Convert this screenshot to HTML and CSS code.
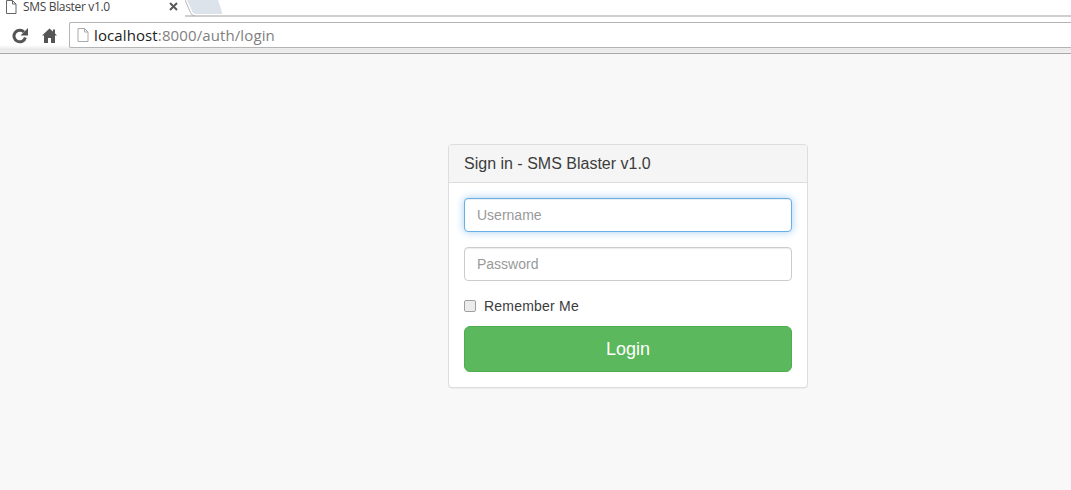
FILE: index.html
```html
<!DOCTYPE html>
<html lang="en">
<head>
    <meta charset="UTF-8">
    <meta name="viewport" content="width=device-width, initial-scale=1.0">
    <title>SMS Blaster v1.0</title>
    <link rel="stylesheet" href="styles.css">
</head>
<body>
    <header class="browser">
        <div class="tabstrip">
            <div class="tab">
                <svg class="page-icon" width="12" height="14" viewBox="0 0 12 14">
                    <path d="M1.5 .5H7.5L11 4V13.5H1.5Z M7.5 .5V4H11" fill="#fff" stroke="#666"/>
                </svg>
                <span class="tab-title">SMS Blaster v1.0</span>
                <svg class="tab-close" width="9" height="9" viewBox="0 0 9 9">
                    <path d="M1 1L8 8M8 1L1 8" stroke="#5a5a5a" stroke-width="2"/>
                </svg>
            </div>
            <svg class="tab-new" width="40" height="17" viewBox="0 0 40 17">
                <path d="M2 0L7.5 12Q8.5 14 10.5 14H35.5Q38 14 37 12L33 0Z" fill="#dde3ea"/>
                <path d="M0 0L5.5 12.5Q7 16 10 16" stroke="#b5b5b5" fill="none"/>
            </svg>
        </div>
        <div class="toolbar">
            <svg class="reload" width="16" height="16" viewBox="0 0 16 16">
                <path d="M13.4 9.5A5.8 5.8 0 1 1 12 4" fill="none" stroke="#555" stroke-width="3"/>
                <path d="M8.5 7.5H16V0Z" fill="#555"/>
            </svg>
            <svg class="home" width="15" height="15" viewBox="0 0 15 15">
                <path d="M7.5 .5L0 7.5H2V15H6V10H9V15H13V7.5H15L13 5.5V1.5H11V3.6Z" fill="#555"/>
            </svg>
            <div class="omnibox">
                <svg class="page-icon" width="12" height="14" viewBox="0 0 12 14">
                    <path d="M1 .5H7.5L11 4V13.5H1Z M7.5 .5V4H11" fill="#fff" stroke="#aaa"/>
                </svg>
                <span class="host">localhost</span><span class="url-rest">:8000/auth/login</span>
            </div>
        </div>
    </header>

    <main class="content">
        <div class="panel">
            <div class="panel-heading">Sign in - SMS Blaster v1.0</div>
            <form class="panel-body">
                <input class="form-control focused" type="text" placeholder="Username">
                <input class="form-control" type="password" placeholder="Password">
                <label class="checkbox">
                    <input type="checkbox">
                    <span>Remember Me</span>
                </label>
                <button class="btn-login" type="button">Login</button>
            </form>
        </div>
    </main>
</body>
</html>
```

FILE: styles.css
```css
/* General Styling */
* {
    box-sizing: border-box;
}

body {
    font-family: "Liberation Sans", Arial, sans-serif;
    font-size: 14px;
    margin: 0;
    height: 490px;
    overflow: hidden;
    background-color: #f8f8f8;
    color: #3c3c3c;
}

/* Browser Chrome */
.browser {
    background-color: #fff;
}

.tabstrip {
    height: 17px;
    display: flex;
    align-items: flex-start;
    border-bottom: 2px solid #cfcfcf;
}

.tab {
    width: 185px;
    height: 17px;
    display: flex;
    align-items: center;
    padding: 0 0 4px 5px;
    background-color: #fff;
}

.tab-title {
    margin-left: 6px;
    font-family: "Open Sans", sans-serif;
    font-size: 12px;
    letter-spacing: -0.33px;
    color: #444;
}

.tab-close {
    margin-left: auto;
    margin-right: 7px;
}

.tab-new {
    display: block;
}

.toolbar {
    height: 37px;
    display: flex;
    align-items: flex-start;
    padding: 5px 0 0 12px;
    background: linear-gradient(#fff 78%, #e9e9e9 90%, #f0f0f0);
    border-bottom: 1px solid #a8a8a8;
}

.reload {
    margin-top: 6px;
}

.home {
    margin: 6px 0 0 14px;
}

.omnibox {
    flex: 1;
    height: 26px;
    margin-left: 12px;
    display: flex;
    align-items: center;
    padding-left: 7px;
    font-family: "Open Sans", sans-serif;
    font-size: 15px;
    letter-spacing: 0.11px;
    background-color: #fff;
    border: 1px solid #b4b4b4;
    border-right: none;
    border-radius: 2px 0 0 2px;
}

.host {
    margin-left: 5px;
    color: #222;
}

.url-rest {
    color: #808080;
}

/* Login Panel */
.content {
    padding: 90px 0 0 448px;
}

.panel {
    width: 360px;
    background-color: #fff;
    border: 1px solid #ddd;
    border-radius: 4px;
    box-shadow: 0 1px 1px rgba(0, 0, 0, 0.05);
}

.panel-heading {
    height: 38px;
    padding: 10px 15px;
    font-size: 16px;
    line-height: 18px;
    background-color: #f5f5f5;
    border-bottom: 1px solid #ddd;
    border-radius: 3px 3px 0 0;
}

.panel-body {
    display: flex;
    flex-direction: column;
    padding: 15px;
}

.form-control {
    width: 100%;
    height: 34px;
    margin-bottom: 15px;
    padding: 6px 12px;
    font-family: inherit;
    font-size: 14px;
    color: #555;
    background-color: #fff;
    border: 1px solid #ccc;
    border-radius: 4px;
    box-shadow: inset 0 1px 1px rgba(0, 0, 0, 0.075);
}

.form-control::placeholder {
    color: #999;
}

.form-control.focused {
    border-color: #66afe9;
    box-shadow: inset 0 1px 1px rgba(0, 0, 0, 0.075), 0 0 8px rgba(102, 175, 233, 0.6);
}

.checkbox {
    display: flex;
    align-items: center;
    height: 20px;
    margin-bottom: 10px;
    letter-spacing: 0.22px;
}

.checkbox input {
    appearance: none;
    width: 12px;
    height: 12px;
    margin: 0 8px 0 0;
    background-color: #ececec;
    border: 1px solid #a0a0a0;
    border-radius: 2px;
}

.btn-login {
    height: 46px;
    font-family: inherit;
    font-size: 18px;
    color: #fff;
    background-color: #5cb85c;
    border: 1px solid #4cae4c;
    border-radius: 6px;
}
```
